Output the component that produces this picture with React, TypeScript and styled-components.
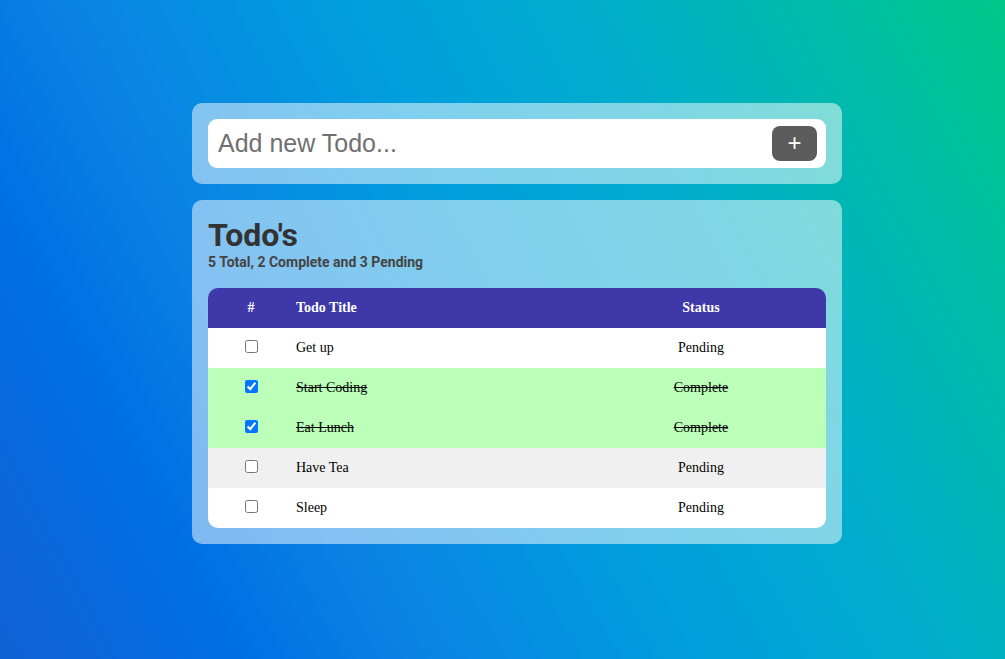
import React, { useState } from 'react';
import styled, { createGlobalStyle } from 'styled-components';

interface Todo {
  id: number;
  title: string;
  done: boolean;
}

const GlobalStyle = createGlobalStyle`
  html, body {
    margin: 0;
    padding: 0;
    height: 100%;
  }
  body {
    min-height: 659px;
    background: linear-gradient(62deg, #1160d5 0%, #006fe4 18%, #0a82e4 30%, #009fdd 52%, #00aecb 70%, #00bba8 86%, #00c888 100%);
    font-family: "Liberation Serif", "Times New Roman", serif;
  }
`;

const Page = styled.div`
  padding-top: 103px;
  padding-left: 192px;
`;

const Column = styled.div`
  width: 650px;
  display: flex;
  flex-direction: column;
  gap: 16px;
`;

const Card = styled.div`
  background: rgba(255, 255, 255, 0.5);
  border-radius: 10px;
  padding: 16px;
`;

const InputBar = styled.form`
  display: flex;
  align-items: center;
  background: #fff;
  border-radius: 9px;
  padding: 7px 9px 7px 10px;
`;

const TodoInput = styled.input`
  flex: 1;
  border: none;
  outline: none;
  background: transparent;
  font-family: "Liberation Sans", Arial, sans-serif;
  font-size: 25px;
  color: #333;
  padding: 0;

  &::placeholder {
    color: #707070;
  }
`;

const AddButton = styled.button`
  width: 45px;
  height: 35px;
  border: none;
  border-radius: 8px;
  background: #5c5c5c;
  color: #fff;
  font-family: "Liberation Sans", Arial, sans-serif;
  font-size: 24px;
  line-height: 1;
  padding: 0 0 2px;
  cursor: pointer;
`;

const Title = styled.h1`
  margin: 0;
  font-family: Roboto, "Noto Sans", sans-serif;
  font-weight: 700;
  font-size: 32px;
  line-height: 38px;
  color: #333;
`;

const Summary = styled.p`
  margin: 0 0 18px;
  font-family: Roboto, "Noto Sans", sans-serif;
  font-weight: 700;
  font-size: 14px;
  line-height: 16px;
  color: #444;
`;

const Table = styled.table`
  width: 100%;
  border-collapse: collapse;
  border-radius: 10px;
  overflow: hidden;
  font-size: 14px;
`;

const HeadCell = styled.th<{ align?: string; width?: number }>`
  height: 40px;
  padding: 0 0 0 ${(p) => (p.align === 'left' ? '2px' : '0')};
  background: #3e38a9;
  color: #fff;
  font-weight: 700;
  text-align: ${(p) => p.align || 'center'};
  width: ${(p) => (p.width ? `${p.width}px` : 'auto')};
`;

const Row = styled.tr<{ done: boolean }>`
  height: 40px;
  background: ${(p) => (p.done ? '#bbffb8' : '#fff')};

  &:nth-child(even) {
    background: ${(p) => (p.done ? '#bbffb8' : '#f0f0f0')};
  }
`;

const Cell = styled.td<{ align?: string; done?: boolean }>`
  padding: 0 0 0 ${(p) => (p.align === 'left' ? '2px' : '0')};
  text-align: ${(p) => p.align || 'center'};
  color: #000;
  text-decoration: ${(p) => (p.done ? 'line-through' : 'none')};
`;

const Check = styled.input`
  margin: 0 0 3px;
  vertical-align: middle;
`;

const initialTodos: Todo[] = [
  { id: 1, title: 'Get up', done: false },
  { id: 2, title: 'Start Coding', done: true },
  { id: 3, title: 'Eat Lunch', done: true },
  { id: 4, title: 'Have Tea', done: false },
  { id: 5, title: 'Sleep', done: false },
];

const App: React.FC = () => {
  const [todos, setTodos] = useState<Todo[]>(initialTodos);
  const [text, setText] = useState('');

  const complete = todos.filter((t) => t.done).length;

  const toggle = (id: number) => {
    setTodos(todos.map((t) => (t.id === id ? { ...t, done: !t.done } : t)));
  };

  const addTodo = (e: React.FormEvent) => {
    e.preventDefault();
    if (!text.trim()) return;
    setTodos([...todos, { id: Date.now(), title: text.trim(), done: false }]);
    setText('');
  };

  return (
    <>
      <GlobalStyle />
      <Page>
        <Column>
          <Card>
            <InputBar onSubmit={addTodo}>
              <TodoInput
                placeholder="Add new Todo..."
                value={text}
                onChange={(e) => setText(e.target.value)}
              />
              <AddButton type="submit">+</AddButton>
            </InputBar>
          </Card>

          <Card>
            <Title>Todo's</Title>
            <Summary>
              {todos.length} Total, {complete} Complete and {todos.length - complete} Pending
            </Summary>
            <Table>
              <thead>
                <tr>
                  <HeadCell width={86}>#</HeadCell>
                  <HeadCell align="left">Todo Title</HeadCell>
                  <HeadCell width={250}>Status</HeadCell>
                </tr>
              </thead>
              <tbody>
                {todos.map((todo) => (
                  <Row key={todo.id} done={todo.done}>
                    <Cell>
                      <Check type="checkbox" checked={todo.done} onChange={() => toggle(todo.id)} />
                    </Cell>
                    <Cell align="left" done={todo.done}>
                      {todo.title}
                    </Cell>
                    <Cell done={todo.done}>{todo.done ? 'Complete' : 'Pending'}</Cell>
                  </Row>
                ))}
              </tbody>
            </Table>
          </Card>
        </Column>
      </Page>
    </>
  );
};

export default App;
